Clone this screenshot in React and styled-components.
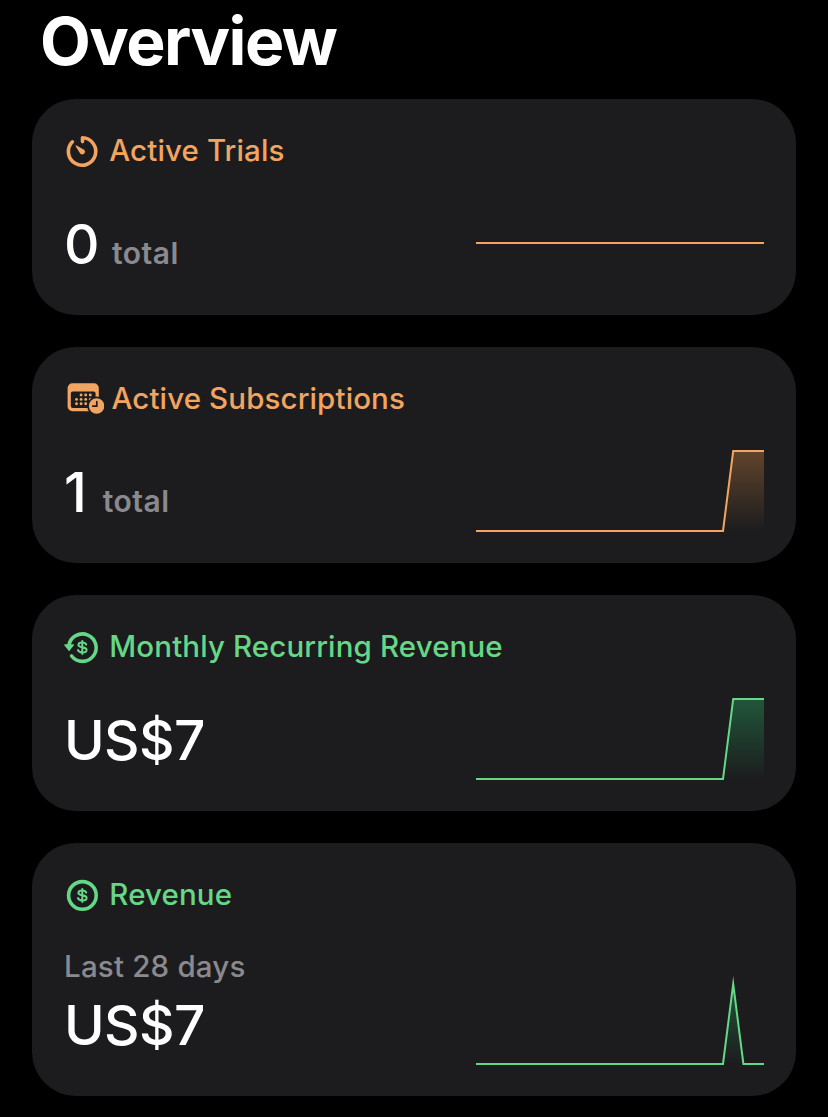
import styled, { createGlobalStyle } from 'styled-components'

const ORANGE = '#F2A560'
const GREEN = '#65D786'

const TimerIcon = () => (
  <Icon width="40" height="36" viewBox="0 0 40 36" fill="none" stroke={ORANGE}>
    <path d="M18.5 8.6V4.8A13.7 13.7 0 1 1 8.4 8.8" strokeWidth="3.6" strokeLinecap="round" strokeLinejoin="round" />
    <path d="M12.2 12.9L19.8 17.2A2.2 2.2 0 0 1 16.8 20.4Z" fill={ORANGE} strokeWidth="1.2" strokeLinejoin="round" />
  </Icon>
)

const CalendarIcon = () => (
  <Icon width="40" height="36" viewBox="0 0 40 36" fill={ORANGE}>
    <path
      fillRule="evenodd"
      d="M8.4 2.3H30A4.8 4.8 0 0 1 34.8 7.1V25.4A4.8 4.8 0 0 1 30 30.2H8.4A4.8 4.8 0 0 1 3.6 25.4V7.1A4.8 4.8 0 0 1 8.4 2.3ZM8.8 10.6A2 2 0 0 0 6.8 12.6V25A2 2 0 0 0 8.8 27H29.6A2 2 0 0 0 31.6 25V12.6A2 2 0 0 0 29.6 10.6Z"
    />
    {[17.1, 21.7, 26.3].map((x) => <circle key={x} cx={x} cy="14" r="1.45" />)}
    {[12.5, 17.1, 21.7, 26.3].map((x) => <circle key={x} cx={x} cy="18.4" r="1.45" />)}
    {[12.5, 17.1, 21.7].map((x) => <circle key={x} cx={x} cy="22.8" r="1.45" />)}
    <circle cx="32.6" cy="25" r="9.4" fill="#1C1C1E" />
    <circle cx="32.6" cy="25" r="7.7" />
    <path d="M32.8 20.6V25.2H28.8" fill="none" stroke="#1C1C1E" strokeWidth="1.7" strokeLinecap="round" strokeLinejoin="round" />
  </Icon>
)

const Dollar = () => (
  <path
    d="M22.2 15.6C21.7 14.2 20.3 13.5 18.3 13.5C16 13.5 14.4 14.4 14.4 15.9C14.4 19.3 22.6 17.3 22.6 20.9C22.6 22.6 20.8 23.4 18.4 23.4C16 23.4 14.4 22.6 14 21M18.3 12V25"
    strokeWidth="2"
    strokeLinecap="round"
  />
)

const RecurringIcon = () => (
  <Icon width="40" height="36" viewBox="0 0 40 36" fill="none" stroke={GREEN}>
    <path d="M4.9 16.6A13.7 13.7 0 1 1 7.6 27" strokeWidth="3.6" strokeLinecap="round" />
    <path d="M.8 15.9H9.4L5.1 21.4Z" fill={GREEN} strokeWidth="1.2" strokeLinejoin="round" />
    <Dollar />
  </Icon>
)

const RevenueIcon = () => (
  <Icon width="40" height="36" viewBox="0 0 40 36" fill="none" stroke={GREEN}>
    <circle cx="18.4" cy="18.4" r="13.8" strokeWidth="3.6" />
    <Dollar />
  </Icon>
)

const cards = [
  { id: 'trials', title: 'Active Trials', icon: TimerIcon, color: ORANGE, value: '0', unit: 'total', line: 'M0 41H288' },
  {
    id: 'subs',
    title: 'Active Subscriptions',
    icon: CalendarIcon,
    color: ORANGE,
    value: '1',
    unit: 'total',
    wideIcon: true,
    line: 'M0 81H247L257.2 1H288',
    area: 'M247 81L257.2 1H288V81Z',
    fill: '#A56C38',
  },
  {
    id: 'mrr',
    title: 'Monthly Recurring Revenue',
    icon: RecurringIcon,
    color: GREEN,
    value: 'US$7',
    line: 'M0 81H247L257.2 1H288',
    area: 'M247 81L257.2 1H288V81Z',
    fill: '#259155',
  },
  {
    id: 'revenue',
    title: 'Revenue',
    icon: RevenueIcon,
    color: GREEN,
    value: 'US$7',
    period: 'Last 28 days',
    line: 'M0 81H247L257.2 1L267.4 81H288',
    area: 'M247 81L257.2 1L267.4 81Z',
    fill: '#259155',
  },
]

const Chart = ({ id, color, line, area, fill }) => (
  <ChartSvg width="288" height="82" viewBox="0 0 288 82" fill="none">
    <defs>
      <linearGradient id={`${id}-fill`} x1="0" y1="1" x2="0" y2="81" gradientUnits="userSpaceOnUse">
        <stop stopColor={fill} stopOpacity=".5" />
        <stop offset="1" stopColor={fill} stopOpacity="0" />
      </linearGradient>
    </defs>
    {area && <path d={area} fill={`url(#${id}-fill)`} />}
    <path d={line} stroke={color} strokeWidth="2" strokeMiterlimit="20" />
  </ChartSvg>
)

const App = () => {
  return (
    <Page>
      <GlobalStyle />
      <Title>Overview</Title>
      <CardList>
        {cards.map((card) => {
          const CardIcon = card.icon
          return (
            <Card key={card.id}>
              <CardHeader $color={card.color} $wideIcon={card.wideIcon}>
                <CardIcon />
                <h2>{card.title}</h2>
              </CardHeader>
              <CardBody $tall={!!card.period}>
                <Metric>
                  {card.period && <Period>{card.period}</Period>}
                  <Amount $narrow={card.value === '1'}>
                    <Value>{card.value}</Value>
                    {card.unit && <Unit>{card.unit}</Unit>}
                  </Amount>
                </Metric>
                <Chart {...card} />
              </CardBody>
            </Card>
          )
        })}
      </CardList>
    </Page>
  )
}

export default App


const GlobalStyle = createGlobalStyle`
   *{
       box-sizing: border-box;
       margin: 0;
       padding: 0;
   }

   body{
       background-color: #000;
       font-family: Inter, 'Liberation Sans', sans-serif;
   }
`

const Page = styled.main`
   width: 828px;
   height: 1117px;
   overflow: hidden;
   background-color: #000;
   padding: 0 32px;
`

const Title = styled.h1`
   height: 99px;
   padding: 1px 0 0 8px;
   color: #fff;
   font-size: 66px;
   font-weight: 700;
   line-height: 80px;
   letter-spacing: -1.5px;
`

const CardList = styled.div`
   display: grid;
   grid-gap: 32px;
`

const Card = styled.section`
   background-color: #1C1C1E;
   border-radius: 44px;
   padding: 34px 32px 31px;
`

const CardHeader = styled.header`
   display: flex;
   align-items: center;
   height: 36px;
   color: ${({ $color }) => $color};

   h2{
       margin-left: ${({ $wideIcon }) => ($wideIcon ? '7.5px' : '5.3px')};
       padding-bottom: 2px;
       font-size: 29.5px;
       font-weight: 550;
       line-height: 36px;
       letter-spacing: 0.12px;
       white-space: nowrap;
   }
`

const Icon = styled.svg`
   flex: none;
`

const CardBody = styled.div`
   display: flex;
   justify-content: space-between;
   align-items: flex-end;
   height: ${({ $tall }) => ($tall ? '152px' : '115px')};
`

const Metric = styled.div`
   padding-bottom: 7px;
`

const Period = styled.p`
   margin-bottom: 8px;
   color: #8A8A8E;
   font-size: 29.5px;
   font-weight: 500;
   line-height: 36px;
   letter-spacing: 0.2px;
`

const Amount = styled.div`
   display: flex;
   align-items: baseline;
   gap: ${({ $narrow }) => ($narrow ? '16.5px' : '13px')};
`

const Value = styled.span`
   color: #fff;
   font-size: 55px;
   font-weight: 460;
   line-height: 66px;
   letter-spacing: -0.6px;
`

const Unit = styled.span`
   color: #8A8A8E;
   font-size: 30px;
   font-weight: 600;
   line-height: 36px;
   letter-spacing: 0.5px;
`

const ChartSvg = styled.svg`
   flex: none;
   overflow: visible;
`
